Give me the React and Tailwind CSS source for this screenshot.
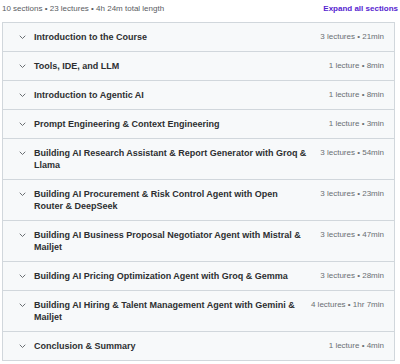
import React from "react";

const rows = [
  ["Introduction to the Course", "3 lectures • 21min"],
  ["Tools, IDE, and LLM", "1 lecture • 8min"],
  ["Introduction to Agentic AI", "1 lecture • 8min"],
  ["Prompt Engineering & Context Engineering", "1 lecture • 3min"],
  ["Building AI Research Assistant & Report Generator with Groq & Llama", "3 lectures • 54min"],
  ["Building AI Procurement & Risk Control Agent with Open Router & DeepSeek", "3 lectures • 23min"],
  ["Building AI Business Proposal Negotiator Agent with Mistral & Mailjet", "3 lectures • 47min"],
  ["Building AI Pricing Optimization Agent with Groq & Gemma", "3 lectures • 28min"],
  ["Building AI Hiring & Talent Management Agent with Gemini & Mailjet", "4 lectures • 1hr 7min"],
  ["Conclusion & Summary", "1 lecture • 4min"],
];

function Chevron() {
  return (
    <svg width="7" height="12" viewBox="0 0 7 12" className="shrink-0">
      <polyline points="1,5 3.5,7.5 6,5" fill="none" stroke="#6a6f73" strokeWidth="1" strokeLinecap="round" strokeLinejoin="round" />
    </svg>
  );
}

export default function App() {
  return (
    <div className="w-[400px] h-[364px] bg-white overflow-hidden" style={{ fontFamily: '"Liberation Sans", Arial, sans-serif' }}>
      <div className="flex justify-between items-start h-[22px] pt-[3px] pl-[2px] pr-[2px] leading-[12px] text-[8px]">
        <span className="text-[#595c5f]">10 sections • 23 lectures • 4h 24m total length</span>
        <span className="font-bold text-[#5624d0]">Expand all sections</span>
      </div>
      <div className="ml-[2px] w-[393px] border border-[#d1d7dc] bg-[#f7f9fa]">
        {rows.map(([title, meta], i) => (
          <div key={i} className={`flex items-start py-[8px] pl-[16px] pr-[10px] leading-[12px] ${i > 0 ? "border-t border-[#d1d7dc]" : ""}`}>
            <Chevron />
            <div className="w-[274px] shrink-0 ml-[8px] text-[9px] font-bold text-[#2d2f31]">{title}</div>
            <div className="flex-1 text-right text-[8px] text-[#6a6f73] whitespace-nowrap">{meta}</div>
          </div>
        ))}
      </div>
    </div>
  );
}
